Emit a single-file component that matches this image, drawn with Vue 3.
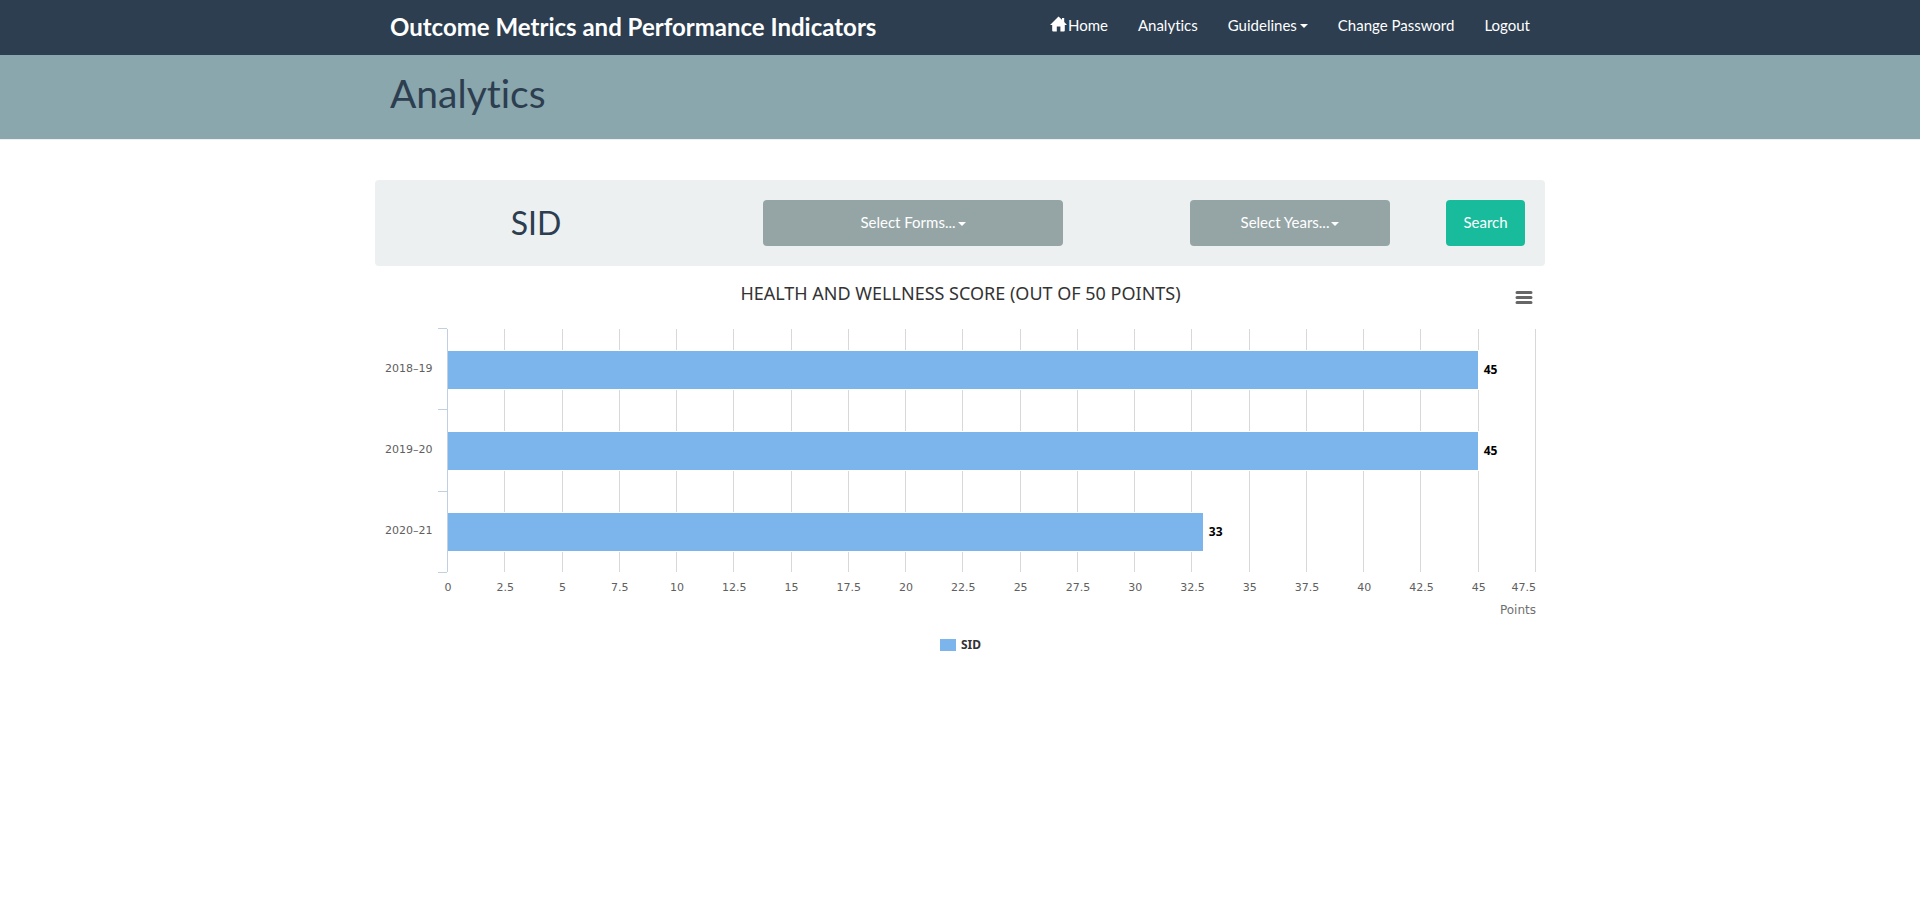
<script setup>
const categories = [
  { name: '2018–19', value: 45 },
  { name: '2019–20', value: 45 },
  { name: '2020–21', value: 33 },
]
const axisMax = 47.5
const step = 2.5
const intervals = axisMax / step
const ticks = Array.from({ length: intervals + 1 }, (_, i) => i * step)
const barWidth = (value) => ({ width: `${(value / axisMax) * 100}%` })
</script>

<template>
  <div class="page">
    <header>
      <nav class="navbar">
        <div class="container navbar-inner">
          <a class="brand" href="#">Outcome Metrics and Performance Indicators</a>
          <ul class="nav-links">
            <li>
              <a href="#">
                <svg class="home-icon" viewBox="0 0 17 16" aria-hidden="true">
                  <path d="M8.5 0.4 L12 3.8 V2 H14.2 V6 L17 9 H14.8 V14.6 Q14.8 15.6 13.8 15.6 H10.4 V10.4 H6.8 V15.6 H3.2 Q2.2 15.6 2.2 14.6 V9 H0 Z" />
                </svg>Home</a>
            </li>
            <li><a href="#">Analytics</a></li>
            <li><a href="#">Guidelines<span class="caret"></span></a></li>
            <li><a href="#">Change Password</a></li>
            <li><a href="#">Logout</a></li>
          </ul>
        </div>
      </nav>
      <div class="page-header">
        <div class="container">
          <h1>Analytics</h1>
        </div>
      </div>
    </header>

    <main class="content">
      <form class="filters" @submit.prevent>
        <h2>SID</h2>
        <div class="cell"><button type="button" class="btn forms">Select Forms...<span class="caret"></span></button></div>
        <div class="cell cell-end"><button type="button" class="btn years">Select Years...<span class="caret"></span></button></div>
        <button type="submit" class="btn search">Search</button>
      </form>

      <section class="chart">
        <div class="chart-head">
          <h3>HEALTH AND WELLNESS SCORE (OUT OF 50 POINTS)</h3>
          <button type="button" class="menu" aria-label="Chart context menu">
            <svg viewBox="0 0 18 14" aria-hidden="true">
              <path d="M2 2.5H16M2 7.5H16M2 12.5H16" />
            </svg>
          </button>
        </div>

        <div class="chart-body">
          <ul class="categories">
            <li v-for="c in categories" :key="c.name">{{ c.name }}</li>
          </ul>
          <div class="tick-column">
            <span v-for="c in categories" :key="c.name"></span>
          </div>
          <div class="plot">
            <div class="gridlines">
              <span v-for="n in intervals" :key="n"></span>
            </div>
            <div class="rows">
              <div v-for="c in categories" :key="c.name" class="row">
                <div class="bar" :style="barWidth(c.value)"></div>
                <span class="value">{{ c.value }}</span>
              </div>
            </div>
          </div>
          <div class="axis">
            <div class="axis-labels">
              <span v-for="t in ticks" :key="t">{{ t }}</span>
            </div>
            <div class="axis-title">Points</div>
          </div>
        </div>

        <div class="legend"><span class="swatch"></span>SID</div>
      </section>
    </main>
  </div>
</template>

<style>
body {
  margin: 0;
  background: #fff;
}
</style>

<style scoped>
.page {
  font-family: Lato, "Liberation Sans", sans-serif;
  font-size: 15px;
  font-variant-ligatures: none;
  line-height: 21px;
  color: #2c3e50;
}
h1, h2, h3, ul {
  margin: 0;
  padding: 0;
  font-weight: 400;
}
ul {
  list-style: none;
}
a {
  color: #fff;
  text-decoration: none;
}
.container {
  box-sizing: border-box;
  max-width: 1170px;
  margin: 0 auto;
  padding: 0 15px;
}
.navbar {
  background: #2c3e50;
}
.navbar-inner {
  display: flex;
  justify-content: space-between;
  height: 55px;
}
.brand {
  font-size: 24px;
  font-weight: 700;
  line-height: 54px;
}
.nav-links {
  display: flex;
  gap: 30px;
  line-height: 50px;
}
.nav-links a {
  display: flex;
  align-items: center;
}
.home-icon {
  width: 17px;
  height: 16px;
  margin-right: 1px;
  margin-bottom: 2px;
  fill: #fff;
}
.caret {
  display: inline-block;
  margin-left: 2px;
  vertical-align: middle;
  border-top: 4px solid #fff;
  border-left: 4px solid transparent;
  border-right: 4px solid transparent;
}
.nav-links .caret {
  margin: 2px 0 0 3px;
}
.page-header {
  background: #8aa7ad;
  border-bottom: 1px solid #ecf0f1;
}
h1 {
  height: 62px;
  padding-top: 22px;
  font-size: 39px;
  line-height: 32px;
}
.content {
  max-width: 1170px;
  margin: 40px auto 0;
}
.filters {
  display: grid;
  grid-template-columns: 322px 432px 1fr 79px;
  align-items: center;
  padding: 20px 20px 20px 0;
  border-radius: 4px;
  background: #ecf0f1;
}
.cell {
  display: flex;
  justify-content: center;
}
.cell-end {
  justify-content: flex-end;
  padding-right: 56px;
}
h2 {
  font-size: 32px;
  line-height: 46px;
  text-align: center;
}
.btn {
  height: 46px;
  padding: 0 0 2px;
  border: 0;
  border-radius: 4px;
  background: #95a5a6;
  color: #fff;
  font-family: inherit;
  font-size: 15px;
}
.forms {
  width: 300px;
}
.years {
  width: 200px;
}
.search {
  background: #18bc9c;
}
.chart {
  padding: 0 9px 0 10px;
  font-family: "DejaVu Sans", sans-serif;
  font-size: 11px;
  line-height: 16px;
  color: #606060;
}
.chart-head {
  display: grid;
  grid-template-columns: 24px 1fr 24px;
  padding-top: 16px;
  height: 47px;
}
h3 {
  grid-column: 2;
  font-family: "Noto Sans", sans-serif;
  font-size: 18px;
  line-height: 22px;
  color: #333;
  text-align: center;
}
.menu {
  display: flex;
  justify-content: center;
  height: 22px;
  padding: 8px 0 0;
  border: 0;
  background: none;
}
.menu svg {
  width: 18px;
  height: 14px;
}
.menu path {
  stroke: #666;
  stroke-width: 3;
  stroke-linecap: round;
}
.chart-body {
  display: grid;
  grid-template-columns: 53px 9px 1fr;
  grid-template-rows: 243px auto;
}
.categories {
  display: grid;
  grid-template-rows: repeat(3, 1fr);
  align-items: center;
}
.categories li {
  padding-bottom: 2px;
}
.tick-column {
  display: grid;
  grid-template-rows: repeat(3, 1fr);
  margin: -1px 0;
  border-bottom: 1px solid #c0d0e0;
}
.tick-column span {
  border-top: 1px solid #c0d0e0;
}
.plot {
  display: grid;
  border-left: 1px solid #c0d0e0;
}
.gridlines,
.rows {
  grid-area: 1 / 1;
}
.gridlines {
  display: grid;
  grid-template-columns: repeat(19, 1fr);
}
.gridlines span {
  border-right: 1px solid #d8d8d8;
}
.rows {
  display: grid;
  grid-template-rows: repeat(3, 1fr);
}
.row {
  display: flex;
  align-items: center;
}
.bar {
  box-sizing: border-box;
  height: 40px;
  border: 1px solid #fff;
  border-left: 0;
  background: #7cb5ec;
}
.value {
  margin-left: 5px;
  font-family: "Noto Sans", sans-serif;
  font-size: 12px;
  font-weight: 700;
  color: #000;
}
.axis {
  grid-column: 3;
  padding: 8px 0 0 1px;
}
.axis-labels {
  display: grid;
  grid-template-columns: repeat(19, 2fr) 1fr;
  margin-left: calc(-100% / 38);
  text-align: center;
}
.axis-labels span:last-child {
  justify-self: end;
}
.axis-title {
  margin-top: 6px;
  font-size: 12px;
  text-align: right;
  color: #707070;
}
.legend {
  display: flex;
  align-items: center;
  justify-content: center;
  gap: 5px;
  margin-top: 19px;
  font-family: "Noto Sans", sans-serif;
  font-size: 12px;
  font-weight: 700;
  color: #333;
}
.swatch {
  width: 16px;
  height: 12px;
  background: #7cb5ec;
}
</style>
